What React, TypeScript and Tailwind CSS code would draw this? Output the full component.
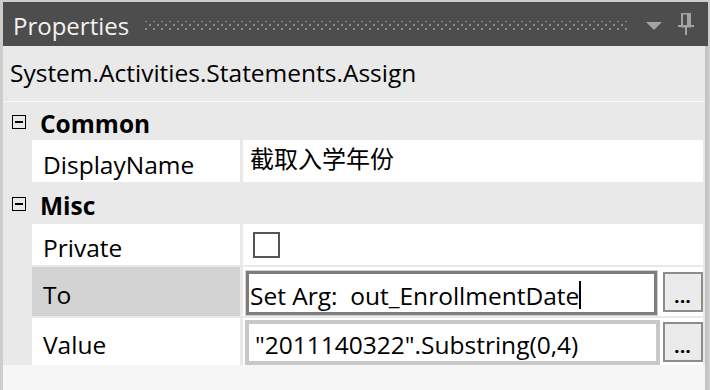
import { useState } from 'react';

const FONT = "font-['Open_Sans','Noto_Sans_CJK_SC',sans-serif]";

function Grip() {
  // dotted drag handle in the title bar
  return (
    <svg className="flex-1 h-[12px] ml-[16px] mr-[18px] mt-[4px]" preserveAspectRatio="none">
      <defs>
        <pattern id="grip" width="8" height="8" patternUnits="userSpaceOnUse">
          <rect x="0" y="0" width="2" height="2" fill="#8a8a8a" />
          <rect x="4" y="4" width="2" height="2" fill="#8a8a8a" />
        </pattern>
      </defs>
      <rect x="0" y="1" width="100%" height="10" fill="url(#grip)" />
    </svg>
  );
}

function Minus() {
  return (
    <div className="w-[14px] h-[14px] border border-black flex items-center justify-center">
      <div className="w-[8px] h-[1.5px] bg-black" />
    </div>
  );
}

function Category({ label, h }: { label: string; h: string }) {
  return (
    <div className={`flex items-center ${h}`}>
      <div className="w-[37px] pl-[9px] pt-[2px]">
        <Minus />
      </div>
      <span className="text-[24.5px] font-bold text-black pt-[6px]">{label}</span>
    </div>
  );
}

function EllipsisButton() {
  return (
    <div className="w-[40px] h-[40px] border-2 border-[#8c8c8c] bg-[#ebebeb] flex items-end justify-center pb-[5px] shrink-0">
      <span className="text-[16px] leading-none font-black tracking-[1px] text-black">...</span>
    </div>
  );
}

const nameCell = 'w-[208px] flex items-center pl-[11px] pt-[8px] text-[24.5px] text-black';

export default function App() {
  const [checked, setChecked] = useState(false);

  return (
    <div className={`w-[710px] h-[390px] bg-[#cdcdcd] pl-[3px] pr-[2px] pt-[2px] flex flex-col overflow-hidden ${FONT}`}>
      {/* Title bar */}
      <div className="h-[44px] bg-[#4d4d4d] flex items-center pl-[10px] pr-[14px] shrink-0">
        <span className="text-[24px] text-[#f2f2f2] pt-[4px]">Properties</span>
        <Grip />
        <svg width="16" height="10" viewBox="0 0 16 10" className="mr-[16px] mt-[4px]">
          <polygon points="0,1 16,1 8,9" fill="#a3a3a3" />
        </svg>
        <svg width="16" height="22" viewBox="0 0 16 22">
          <rect x="4" y="0.5" width="8" height="13" fill="none" stroke="#a3a3a3" strokeWidth="2" />
          <rect x="9" y="1" width="2" height="12" fill="#a3a3a3" />
          <rect x="0" y="12" width="16" height="2" fill="#a3a3a3" />
          <rect x="7" y="13" width="2" height="9" fill="#a3a3a3" />
        </svg>
      </div>

      {/* Content */}
      <div className="flex-1 bg-[#f6f6f6] border-r-[3px] border-[#c4c4c4] flex flex-col">
        <div className="bg-[#e9e9e9] flex flex-col">
          <div className="h-[56px] flex items-center pl-[7px] border-b border-[#f7f7f7]">
            <span className="text-[24.5px] text-black">System.Activities.Statements.Assign</span>
          </div>

          <Category label="Common" h="h-[38px]" />

          {/* DisplayName */}
          <div className="h-[42px] flex pl-[29px] pr-[2px]">
            <div className={`${nameCell} bg-white`}>DisplayName</div>
            <div className="w-[3px]" />
            <div className="flex-1 bg-white flex items-center pl-[7px] pb-[4px] text-[24px] text-black">截取入学年份</div>
          </div>

          <Category label="Misc" h="h-[42px]" />

          {/* Private */}
          <div className="h-[41px] flex pl-[29px] pr-[2px]">
            <div className={`${nameCell} bg-white`}>Private</div>
            <div className="w-[3px]" />
            <div className="flex-1 bg-white flex items-center pl-[10px]">
              <button
                onClick={() => setChecked(!checked)}
                className="w-[27px] h-[26px] border-2 border-[#555555] bg-white"
              />
            </div>
          </div>

          <div className="h-[2px]" />

          {/* To (selected) */}
          <div className="h-[49px] flex pl-[29px] pr-[2px]">
            <div className={`${nameCell} bg-[#d3d3d3]`}>To</div>
            <div className="w-[3px]" />
            <div className="flex-1 bg-white flex items-start pl-[2px] pt-[3px]">
              <div className="flex-1 h-[46px] border border-[#cfcfcf]">
                <div className="h-full border-[3px] border-[#7d7d7d] flex items-center pl-[1px] pt-[7px] text-[24.5px] text-black whitespace-pre">
                  <span>Set Arg:  out_EnrollmentDate</span>
                  <span className="w-[2px] h-[28px] bg-black -mt-[4px]" />
                </div>
              </div>
              <div className="w-[5px]" />
              <div className="pt-[2px]">
                <EllipsisButton />
              </div>
            </div>
          </div>

          <div className="h-[2px]" />

          {/* Value */}
          <div className="h-[47px] flex pl-[29px] pr-[2px]">
            <div className={`${nameCell} bg-white`}>Value</div>
            <div className="w-[3px]" />
            <div className="flex-1 bg-white flex items-start pl-[2px] pt-[2px]">
              <div className="flex-1 h-[45px] border-[4px] border-[#c8c8c8] flex items-center pl-[6px] pt-[6px] text-[24.5px] text-black whitespace-pre">
                "2011140322".Substring(0,4)
              </div>
              <div className="w-[3px]" />
              <div className="pt-[2px]">
                <EllipsisButton />
              </div>
            </div>
          </div>
        </div>
      </div>
    </div>
  );
}
